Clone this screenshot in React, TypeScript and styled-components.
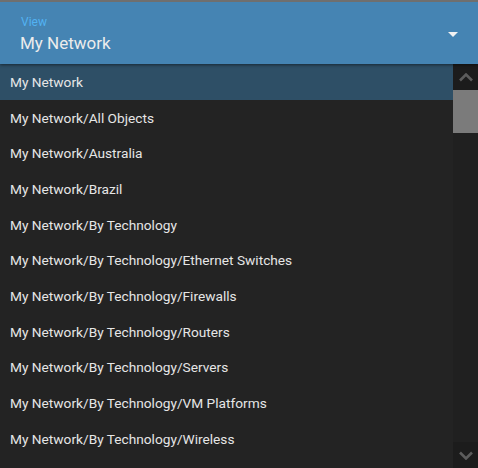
import * as React from 'react'
import styled, { createGlobalStyle } from 'styled-components'

const items = [
  'My Network',
  'My Network/All Objects',
  'My Network/Australia',
  'My Network/Brazil',
  'My Network/By Technology',
  'My Network/By Technology/Ethernet Switches',
  'My Network/By Technology/Firewalls',
  'My Network/By Technology/Routers',
  'My Network/By Technology/Servers',
  'My Network/By Technology/VM Platforms',
  'My Network/By Technology/Wireless',
]

const GlobalStyle = createGlobalStyle`
  html, body {
    margin: 0;
    padding: 0;
    background: #232323;
    font-family: Roboto, "Liberation Sans", sans-serif;
  }
`

const Chevron = ({ down }: { down?: boolean }) => (
  <svg width="14" height="9" viewBox="0 0 14 9">
    <path
      d={down ? 'M1 1.5 L7 7.5 L13 1.5' : 'M1 7.5 L7 1.5 L13 7.5'}
      fill="none"
      stroke="#5c5c5c"
      strokeWidth="2.6"
    />
  </svg>
)

const App: React.FC = () => (
  <Page>
    <GlobalStyle />
    <Header>
      <Field>
        <FieldLabel>View</FieldLabel>
        <FieldValue>My Network</FieldValue>
      </Field>
      <Caret />
    </Header>
    <ListArea>
      <List>
        {items.map((item, i) => (
          <Item key={item} selected={i === 0}>
            {item}
          </Item>
        ))}
      </List>
      <ScrollBar>
        <ScrollButton>
          <Chevron />
        </ScrollButton>
        <Thumb />
        <Track />
        <ScrollButton>
          <Chevron down />
        </ScrollButton>
      </ScrollBar>
    </ListArea>
  </Page>
)

const Page = styled.div`
  width: 478px;
  height: 468px;
  display: flex;
  flex-direction: column;
  overflow: hidden;
  background: #232323;
`

const Header = styled.div`
  height: 62px;
  border-top: 2px solid #6f6f6f;
  background: #4584b3;
  display: flex;
  align-items: center;
  padding: 0 20px 0 21px;
  box-shadow: 0 1px 3px rgba(0, 0, 0, 0.5);
  position: relative;
  z-index: 1;
`

const Field = styled.div`
  flex: 1;
  display: flex;
  flex-direction: column;
  padding-top: 2px;
`

const FieldLabel = styled.span`
  font-size: 12px;
  color: #52b2f2;
  line-height: 14px;
`

const FieldValue = styled.span`
  font-size: 17px;
  color: #ececec;
  line-height: 22px;
  margin-top: 3px;
  margin-left: -1px;
`

const Caret = styled.span`
  width: 0;
  height: 0;
  border-left: 5px solid transparent;
  border-right: 5px solid transparent;
  border-top: 5px solid #f2f2f2;
  margin-top: 2px;
`

const ListArea = styled.div`
  flex: 1;
  display: flex;
  min-height: 0;
`

const List = styled.div`
  flex: 1;
  display: flex;
  flex-direction: column;
`

const Item = styled.div<{ selected?: boolean }>`
  height: 35.7px;
  flex-shrink: 0;
  display: flex;
  align-items: center;
  padding-left: 10px;
  font-size: 13.7px;
  color: #e6e6e6;
  background: ${(p) => (p.selected ? '#2e4f66' : 'transparent')};
`

const ScrollBar = styled.div`
  width: 25px;
  display: flex;
  flex-direction: column;
  background: #1c1c1c;
`

const ScrollButton = styled.div`
  height: 26px;
  display: flex;
  align-items: center;
  justify-content: center;
  flex-shrink: 0;
`

const Thumb = styled.div`
  height: 43px;
  background: #7b7b7b;
`

const Track = styled.div`
  flex: 1;
  background: #202020;
`

export default App
